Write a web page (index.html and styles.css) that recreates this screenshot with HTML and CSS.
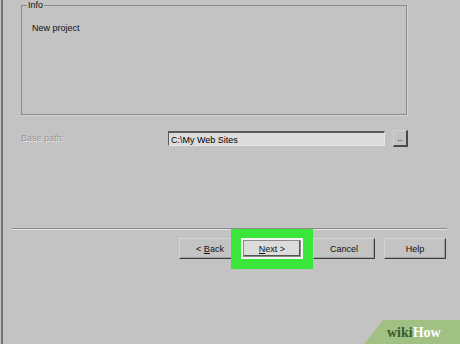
FILE: index.html
```html
<!DOCTYPE html>
<html>
<head>
<meta charset="utf-8">
<link rel="stylesheet" href="styles.css">
</head>
<body>
<div class="frame">
  <fieldset class="info">
    <legend class="info-legend">Info</legend>
    <p class="info-text">New project</p>
  </fieldset>
  <div class="path-row">
    <span class="path-label">Base path:</span>
    <div class="path-input">C:\My Web Sites</div>
    <div class="browse">..</div>
  </div>
  <div class="separator"></div>
  <div class="buttons">
    <button class="btn">&lt; <u>B</u>ack</button>
    <div class="next-wrap"><button class="btn btn-next"><u>N</u>ext &gt;</button></div>
    <button class="btn btn-cancel">Cancel</button>
    <button class="btn">Help</button>
  </div>
  <div class="watermark"><span class="wm-wiki">wiki</span><span class="wm-how">How</span></div>
</div>
</body>
</html>
```
FILE: styles.css
```css
html, body {
  margin: 0;
  padding: 0;
}
body {
  width: 460px;
  height: 344px;
  overflow: hidden;
  background: #c3c3c3;
  font-family: "Liberation Sans", Arial, sans-serif;
  font-size: 9px;
  color: #111;
}
.frame {
  position: relative;
  margin-left: 1px;
  height: 344px;
  border-left: 2px solid #727272;
  box-sizing: border-box;
}
.info {
  box-sizing: border-box;
  margin: 0 0 0 18px;
  width: 386px;
  height: 115px;
  padding: 0 0 0 10px;
  border: 1px solid #8a8a8a;
  box-shadow: 1px 1px 0 #d6d6d6;
}
.info-legend {
  padding: 0 1px;
  margin-left: -5px;
  line-height: 10px;
  font-size: 9px;
}
.info-text {
  margin: 13px 0 0 0;
  line-height: 11px;
}
.path-row {
  display: flex;
  align-items: center;
  margin: 15px 0 0 18px;
  height: 16px;
}
.path-label {
  width: 147px;
  color: #979797;
  text-shadow: 1px 1px 0 #e4e4e4;
}
.path-input {
  box-sizing: border-box;
  width: 217px;
  height: 15px;
  padding: 1px 0 0 2px;
  line-height: 12px;
  background: #dcdcdc;
  border-top: 2px solid #5a5a5a;
  border-left: 1px solid #5a5a5a;
  border-right: 1px solid #e6e6e6;
  border-bottom: 1px solid #e6e6e6;
  color: #000;
}
.browse {
  box-sizing: border-box;
  width: 15px;
  height: 17px;
  margin-left: 8px;
  display: flex;
  align-items: flex-end;
  justify-content: center;
  line-height: 9px;
  padding-bottom: 2px;
  border-top: 1px solid #d0d0d0;
  border-left: 1px solid #d0d0d0;
  border-right: 2px solid #4a4a4a;
  border-bottom: 2px solid #4a4a4a;
  font-size: 9px;
}
.separator {
  margin: 82px 0 0 9px;
  width: 435px;
  height: 1px;
  background: #8a8a8a;
  border-bottom: 1px solid #e2e2e2;
}
.buttons {
  display: flex;
  margin: 8px 0 0 176px;
}
.btn {
  box-sizing: border-box;
  width: 62px;
  height: 21px;
  padding: 0;
  margin: 0;
  font-family: "Liberation Sans", Arial, sans-serif;
  font-size: 9px;
  color: #111;
  background: #c3c3c3;
  border-top: 1px solid #d4d4d4;
  border-left: 1px solid #d4d4d4;
  border-right: 1px solid #3c3c3c;
  border-bottom: 1px solid #3c3c3c;
  box-shadow: inset -1px -1px 0 #a0a0a0;
}
.next-wrap {
  position: relative;
  width: 62px;
  height: 21px;
}
.next-wrap::before {
  content: "";
  position: absolute;
  left: -10px;
  right: -10px;
  top: -9px;
  bottom: -10px;
  background: #3be63b;
}
.btn-next {
  position: relative;
  background: #dcdcdc;
  border: 2px solid #f4f4f4;
  box-shadow: inset 0 0 0 1px #8a8a8a, inset -1px -1px 0 1px #555;
}
.btn-cancel {
  margin-left: 10px;
  margin-right: 9px;
}
.watermark {
  position: absolute;
  right: 0;
  bottom: 0;
  width: 96px;
  height: 24px;
  box-sizing: border-box;
  padding: 6px 0 0 23px;
  background: #a1c184;
  clip-path: polygon(19px 0, 100% 0, 100% 100%, 0 100%);
  font-family: "Liberation Serif", "Times New Roman", serif;
  font-weight: bold;
  font-size: 14px;
  line-height: 14px;
}
.wm-wiki {
  color: #3b5a2c;
}
.wm-how {
  color: #ffffff;
}
```
